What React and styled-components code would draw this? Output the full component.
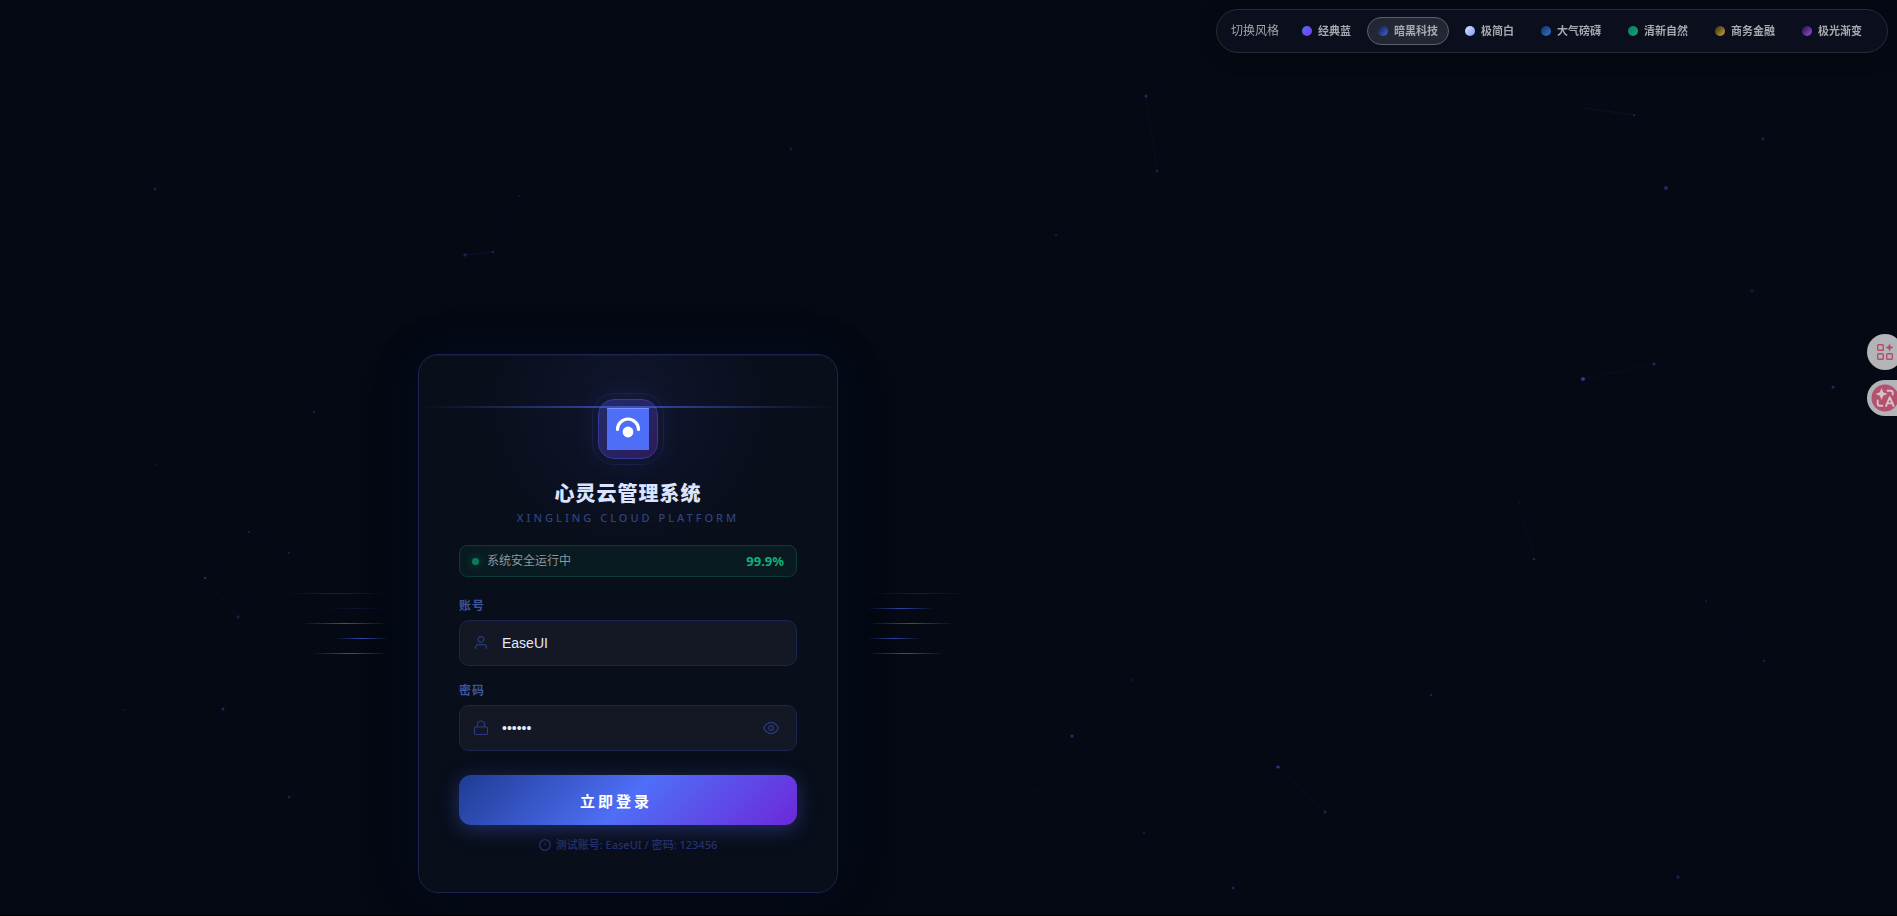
import React, { useState } from "react";
import styled, { createGlobalStyle } from "styled-components";

const GlobalStyle = createGlobalStyle`
  * {
    box-sizing: border-box;
  }

  body {
    margin: 0;
    background: #040913;
    font-family: "Noto Sans", "Noto Sans CJK SC", sans-serif;
  }

  button,
  input {
    font-family: inherit;
  }
`;

const themes = [
  { name: "经典蓝", from: "#4f6ef7", to: "#7c3aed" },
  { name: "暗黑科技", from: "#141c3c", to: "#4661dc" },
  { name: "极简白", from: "#d9e2ff", to: "#7d9bff" },
  { name: "大气磅礴", from: "#12305e", to: "#3576cf" },
  { name: "清新自然", from: "#0b7a5a", to: "#10a576" },
  { name: "商务金融", from: "#2c2618", to: "#d0a92f" },
  { name: "极光渐变", from: "#1e0f45", to: "#a04be0" },
];

// x, y, radius, opacity
const particles = [
  [155, 189, 1.4, 0.25],
  [519, 196, 0.8, 0.3],
  [493, 252, 1.2, 0.25],
  [465, 255, 1.7, 0.25],
  [314, 412, 1.2, 0.25],
  [156, 465, 1, 0.15],
  [249, 532, 1, 0.25],
  [289, 553, 1.2, 0.2],
  [205, 578, 1.2, 0.35],
  [238, 617, 1.7, 0.2],
  [223, 709, 1.5, 0.35],
  [124, 710, 1, 0.15],
  [289, 797, 1.5, 0.25],
  [791, 149, 1.4, 0.2],
  [1056, 235, 1.2, 0.2],
  [1146, 96, 1.5, 0.35],
  [1157, 171, 1.6, 0.2],
  [1634, 115, 1.2, 0.25],
  [1666, 188, 2, 0.35],
  [1763, 139, 1.8, 0.2],
  [1752, 291, 1.8, 0.15],
  [1583, 379, 2, 0.5],
  [1654, 364, 1.5, 0.35],
  [1833, 387, 1.6, 0.35],
  [1519, 502, 0.8, 0.2],
  [1534, 559, 1.2, 0.3],
  [1706, 601, 1.2, 0.15],
  [1764, 661, 1.2, 0.25],
  [1132, 680, 1, 0.2],
  [1072, 736, 1.5, 0.4],
  [1035, 791, 0.8, 0.15],
  [1431, 695, 1.3, 0.25],
  [1278, 767, 1.6, 0.5],
  [1325, 812, 1.4, 0.3],
  [1144, 833, 1.3, 0.2],
  [1233, 888, 1.4, 0.3],
  [1678, 877, 1.7, 0.25],
];

// x1, y1, x2, y2, opacity
const links = [
  [465, 255, 493, 252, 0.09],
  [493, 252, 519, 196, 0.05],
  [465, 255, 519, 196, 0.02],
  [249, 532, 289, 553, 0.06],
  [249, 532, 205, 578, 0.05],
  [205, 578, 238, 617, 0.05],
  [249, 532, 238, 617, 0.03],
  [289, 553, 238, 617, 0.02],
  [1146, 96, 1157, 171, 0.05],
  [1146, 96, 1218, 62, 0.04],
  [1584, 108, 1634, 115, 0.09],
  [1634, 115, 1666, 188, 0.03],
  [1583, 379, 1654, 364, 0.06],
  [1519, 502, 1534, 559, 0.05],
  [1706, 601, 1764, 661, 0.03],
  [1132, 680, 1072, 736, 0.03],
  [1072, 736, 1035, 791, 0.03],
  [1278, 767, 1325, 812, 0.05],
];

const leftStreaks = [
  { width: 104, glow: 0.3 },
  { width: 64, glow: 0.15 },
  { width: 88, glow: 0.85 },
  { width: 54, glow: 0.8 },
  { width: 78, glow: 0.85 },
];

const rightStreaks = [
  { width: 104, glow: 0.25 },
  { width: 68, glow: 0.75 },
  { width: 88, glow: 0.8 },
  { width: 54, glow: 0.75 },
  { width: 78, glow: 0.85 },
];

const Page = styled.div`
  position: relative;
  min-height: 100vh;
  display: grid;
  grid-template-columns: minmax(0, 1fr) 641px;
  align-items: end;
  padding-bottom: 22px;
  overflow: hidden;
  border-bottom: 1px solid #000;
  background: #040913;
`;

const Particles = styled.svg`
  position: absolute;
  top: 0;
  left: 0;
  pointer-events: none;
`;

const ThemeBar = styled.nav`
  position: fixed;
  top: 9px;
  right: 9px;
  display: flex;
  align-items: center;
  gap: 5px;
  padding: 7px 14px;
  border: 1px solid #282b38;
  border-radius: 22px;
  background: #0b0e1c;
  box-shadow: 0 4px 20px rgba(0, 0, 0, 0.2);
`;

const ThemeBarLabel = styled.span`
  margin-right: 7px;
  color: #a3a4aa;
  font-size: 12px;
  line-height: 16px;
`;

const ThemeButton = styled.button`
  display: flex;
  align-items: center;
  gap: 6px;
  height: 28px;
  padding: 0 10px;
  border: 1px solid ${(props) => (props.$active ? "#5b5f69" : "transparent")};
  border-radius: 14px;
  background: ${(props) => (props.$active ? "#232733" : "transparent")};
  color: #a6a8af;
  font-size: 11px;
  font-weight: 600;
  line-height: 16px;
  white-space: nowrap;
  cursor: pointer;
`;

const ThemeDot = styled.span`
  width: 10px;
  height: 10px;
  border-radius: 50%;
  background: linear-gradient(
    135deg,
    ${(props) => props.$from},
    ${(props) => props.$to}
  );
`;

const CardWrap = styled.main`
  position: relative;
  width: 420px;
  justify-self: center;
`;

const Streaks = styled.div`
  position: absolute;
  top: 50%;
  ${(props) => (props.$side === "left" ? "right" : "left")}: calc(100% + 29px);
  display: flex;
  flex-direction: column;
  align-items: ${(props) => (props.$side === "left" ? "flex-end" : "flex-start")};
  gap: 14px;
  margin-top: -31px;
`;

const Streak = styled.span`
  width: ${(props) => props.$width}px;
  height: 1px;
  background: linear-gradient(90deg, transparent, #3c58d0, transparent);
  opacity: ${(props) => props.$glow};
`;

const Card = styled.form`
  position: relative;
  display: flex;
  flex-direction: column;
  padding: 44px 40px 39px;
  border: 1px solid #19234e;
  border-radius: 20px;
  background:
    radial-gradient(circle at 50% 50px, #11162f 0, rgba(17, 22, 47, 0) 150px),
    #080e1a;
  box-shadow:
    0 0 60px rgba(60, 80, 200, 0.08),
    0 16px 60px rgba(0, 0, 0, 0.2),
    inset 0 1px 0 rgba(255, 255, 255, 0.04);
`;

const ScanLine = styled.span`
  position: absolute;
  top: 51px;
  left: 0;
  right: 0;
  height: 2px;
  background: linear-gradient(90deg, transparent, #4f6ef7, transparent);
  opacity: 0.6;
`;

const LogoBox = styled.div`
  position: relative;
  display: grid;
  place-items: center;
  align-self: center;
  width: 60px;
  height: 60px;
  border: 1px solid #34389a;
  border-radius: 16px;
  background: linear-gradient(135deg, #202d69, #2d1b59);
  box-shadow: 0 0 30px rgba(79, 110, 247, 0.12);

  &::after {
    content: "";
    position: absolute;
    inset: -7px;
    border: 1px solid rgba(79, 110, 247, 0.12);
    border-radius: 22px;
  }
`;

const Title = styled.h1`
  margin: 21px 0 0;
  color: #dbe4ff;
  font-size: 20px;
  font-weight: 900;
  line-height: 28px;
  letter-spacing: 1px;
  text-align: center;
`;

const Subtitle = styled.p`
  margin: 2px 0 0;
  color: #30437f;
  font-size: 11px;
  font-weight: 500;
  line-height: 16px;
  letter-spacing: 3px;
  text-align: center;
`;

const Status = styled.div`
  display: flex;
  align-items: center;
  height: 32px;
  margin-top: 19px;
  padding: 0 12px;
  border: 1px solid #0c3a36;
  border-radius: 8px;
  background: #091b21;
  color: #8f999d;
  font-size: 12px;
  line-height: 16px;
`;

const StatusDot = styled.span`
  width: 7px;
  height: 7px;
  margin-right: 8px;
  border-radius: 50%;
  background: #0c7a59;
  box-shadow: 0 0 8px rgba(16, 185, 129, 0.4);
`;

const StatusValue = styled.strong`
  margin-left: auto;
  color: #10b07c;
  font-size: 13px;
  font-weight: 700;
`;

const Field = styled.div`
  display: flex;
  flex-direction: column;
  gap: 6px;
  margin-top: ${(props) => (props.$first ? 21 : 17)}px;
`;

const FieldLabel = styled.label`
  color: #3c559d;
  font-size: 12px;
  font-weight: 600;
  line-height: 16px;
  letter-spacing: 1px;
`;

const InputBox = styled.div`
  display: flex;
  align-items: center;
  gap: 13px;
  height: 46px;
  padding: 0 15px 0 13px;
  border: 1px solid #1c2550;
  border-radius: 10px;
  background: #141724;
  color: #293b84;

  svg {
    display: block;
    flex: none;
  }
`;

const TextInput = styled.input`
  flex: 1;
  min-width: 0;
  padding: 0;
  border: none;
  outline: none;
  background: transparent;
  color: #e3e9ff;
  font-family: "Liberation Sans", Arial, sans-serif;
  font-size: 14px;
`;

const EyeButton = styled.button`
  padding: 0 2px;
  border: none;
  background: transparent;
  color: #293b84;
  cursor: pointer;
`;

const LoginButton = styled.button`
  display: flex;
  align-items: center;
  justify-content: center;
  gap: 8px;
  height: 50px;
  margin-top: 24px;
  padding: 0;
  border: none;
  border-radius: 12px;
  background: linear-gradient(135deg, #1e3c92 0%, #4f6ef7 50%, #6d28d9 100%);
  box-shadow: 0 4px 20px rgba(79, 110, 247, 0.35);
  color: #fff;
  font-size: 15px;
  font-weight: 700;
  letter-spacing: 3px;
  cursor: pointer;
`;

const ArrowSlot = styled.span`
  width: 16px;
  height: 16px;
`;

const Hint = styled.p`
  display: flex;
  align-items: center;
  justify-content: center;
  gap: 5px;
  margin: 12px 0 0;
  color: #243270;
  font-size: 11px;
  font-weight: 500;
  line-height: 16px;
`;

const SideTools = styled.aside`
  position: fixed;
  top: 334px;
  right: -6px;
  display: flex;
  flex-direction: column;
  gap: 10px;
`;

const SideButton = styled.button`
  display: grid;
  place-items: center;
  width: 36px;
  height: 36px;
  padding: 0;
  border: none;
  border-radius: ${(props) => (props.$flat ? "18px 0 0 18px" : "50%")};
  background: #b3b4b8;
  cursor: pointer;
`;

function UserIcon() {
  return (
    <svg width="16" height="16" viewBox="0 0 16 16" fill="none" stroke="currentColor" strokeWidth="1.2" strokeLinecap="round">
      <circle cx="8" cy="4.4" r="2.8" />
      <path d="M2.5 13.6v-1a3 3 0 0 1 3-3h5a3 3 0 0 1 3 3v1" />
    </svg>
  );
}

function LockIcon() {
  return (
    <svg width="16" height="16" viewBox="0 0 16 16" fill="none" stroke="currentColor" strokeWidth="1.2">
      <rect x="1.5" y="7" width="13" height="7.5" rx="1.2" />
      <path d="M4.5 7V4.5a3.5 3.5 0 0 1 7 0V7" />
    </svg>
  );
}

function EyeIcon() {
  return (
    <svg width="16" height="16" viewBox="0 0 16 16" fill="none" stroke="currentColor" strokeWidth="1.2">
      <path d="M.6 8S3.2 2.6 8 2.6 15.4 8 15.4 8 12.8 13.4 8 13.4.6 8 .6 8Z" />
      <circle cx="8" cy="8" r="2.3" />
    </svg>
  );
}

function InfoIcon() {
  return (
    <svg width="12" height="12" viewBox="0 0 12 12" fill="none" stroke="currentColor" strokeWidth="1.2">
      <circle cx="6" cy="6" r="5.3" />
      <path d="M6 4.6v1.4" />
    </svg>
  );
}

function Logo() {
  return (
    <svg width="42" height="42" viewBox="0 0 42 42" fill="none">
      <rect width="42" height="42" fill="#4f6ef7" />
      <path d="M0 .5h42" stroke="#7890fb" />
      <path d="M10.5 21.5a10.5 10.5 0 0 1 21 0" stroke="#fff" strokeWidth="3.2" strokeLinecap="round" />
      <circle cx="21" cy="24" r="5.4" fill="#fff" />
    </svg>
  );
}

function AppsIcon() {
  return (
    <svg width="18" height="18" viewBox="0 0 18 18" fill="none" stroke="#b94c6b" strokeWidth="1.4">
      <rect x="1.7" y="1.7" width="5.6" height="5.6" rx=".8" />
      <rect x="1.7" y="10.7" width="5.6" height="5.6" rx=".8" />
      <rect x="10.7" y="10.7" width="5.6" height="5.6" rx=".8" />
      <path d="M13.5.4l1.2 2.9 2.9 1.2-2.9 1.2-1.2 2.9-1.2-2.9-2.9-1.2 2.9-1.2z" fill="#b94c6b" stroke="none" />
    </svg>
  );
}

function TranslateIcon() {
  return (
    <svg width="28" height="28" viewBox="0 0 28 28" fill="none" stroke="#d3c4ca" strokeWidth="1.9" strokeLinecap="round" strokeLinejoin="round">
      <circle cx="14" cy="14" r="13.5" fill="#b5506e" stroke="none" />
      <path d="M10.5 4l1.7 4.3 4.3 1.7-4.3 1.7-1.7 4.3-1.7-4.3L4.5 10l4.3-1.7z" fill="#d3c4ca" stroke="none" />
      <path d="M16.5 6.8h3.2a2 2 0 0 1 2 2v1.7" />
      <path d="M6.7 16.5v3.2a2 2 0 0 0 2 2h2.6" />
      <path d="M15 22l3.8-8.8 3.8 8.8M16.3 19.4h5" />
    </svg>
  );
}

function ParticleField() {
  return (
    <Particles width="1897" height="915" aria-hidden="true">
      {links.map(([x1, y1, x2, y2, opacity]) => (
        <line
          key={`${x1}-${y1}-${x2}`}
          x1={x1}
          y1={y1}
          x2={x2}
          y2={y2}
          stroke="#4f6ef7"
          strokeOpacity={opacity}
        />
      ))}
      {particles.map(([x, y, r, opacity]) => (
        <circle key={`${x}-${y}`} cx={x} cy={y} r={r} fill="#4f6ef7" opacity={opacity} />
      ))}
    </Particles>
  );
}

function ThemeSwitcher() {
  const [current, setCurrent] = useState("暗黑科技");

  return (
    <ThemeBar>
      <ThemeBarLabel>切换风格</ThemeBarLabel>
      {themes.map((theme) => (
        <ThemeButton
          key={theme.name}
          type="button"
          $active={theme.name === current}
          onClick={() => setCurrent(theme.name)}
        >
          <ThemeDot $from={theme.from} $to={theme.to} />
          {theme.name}
        </ThemeButton>
      ))}
    </ThemeBar>
  );
}

function StreakGroup({ side, items }) {
  return (
    <Streaks $side={side}>
      {items.map((item, index) => (
        <Streak key={index} $width={item.width} $glow={item.glow} />
      ))}
    </Streaks>
  );
}

function LoginCard() {
  const [account, setAccount] = useState("EaseUI");
  const [password, setPassword] = useState("123456");
  const [visible, setVisible] = useState(false);

  const handleSubmit = (evt) => {
    evt.preventDefault();
  };

  return (
    <CardWrap>
      <StreakGroup side="left" items={leftStreaks} />
      <StreakGroup side="right" items={rightStreaks} />
      <Card onSubmit={handleSubmit}>
        <LogoBox>
          <Logo />
        </LogoBox>
        <ScanLine />
        <Title>心灵云管理系统</Title>
        <Subtitle>XINGLING CLOUD PLATFORM</Subtitle>

        <Status>
          <StatusDot />
          系统安全运行中
          <StatusValue>99.9%</StatusValue>
        </Status>

        <Field $first>
          <FieldLabel htmlFor="account">账号</FieldLabel>
          <InputBox>
            <UserIcon />
            <TextInput
              id="account"
              type="text"
              value={account}
              onChange={(e) => setAccount(e.target.value)}
            />
          </InputBox>
        </Field>

        <Field>
          <FieldLabel htmlFor="password">密码</FieldLabel>
          <InputBox>
            <LockIcon />
            <TextInput
              id="password"
              type={visible ? "text" : "password"}
              value={password}
              onChange={(e) => setPassword(e.target.value)}
            />
            <EyeButton
              type="button"
              aria-label="显示密码"
              onClick={() => setVisible(!visible)}
            >
              <EyeIcon />
            </EyeButton>
          </InputBox>
        </Field>

        <LoginButton type="submit">
          立即登录
          <ArrowSlot />
        </LoginButton>
        <Hint>
          <InfoIcon />
          测试账号: EaseUI / 密码: 123456
        </Hint>
      </Card>
    </CardWrap>
  );
}

function App() {
  return (
    <Page>
      <GlobalStyle />
      <ParticleField />
      <ThemeSwitcher />
      <LoginCard />
      <SideTools>
        <SideButton type="button" aria-label="应用">
          <AppsIcon />
        </SideButton>
        <SideButton type="button" aria-label="翻译" $flat>
          <TranslateIcon />
        </SideButton>
      </SideTools>
    </Page>
  );
}

export default App;
